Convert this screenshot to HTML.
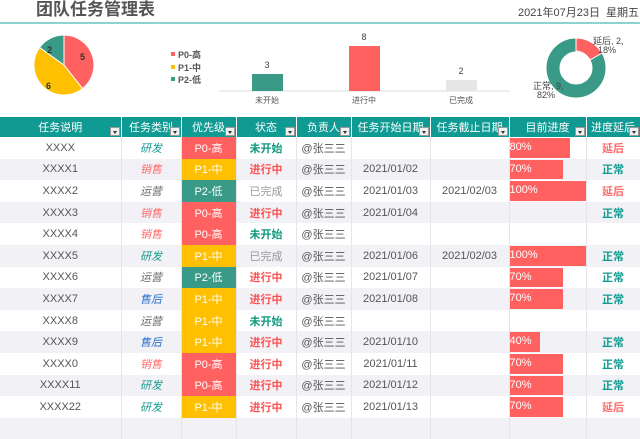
<!DOCTYPE html><html><head><meta charset="utf-8"><style>
*{margin:0;padding:0;box-sizing:border-box}
body{width:640px;height:427px;overflow:hidden;background:#fff;font-family:"Liberation Sans","Noto Sans CJK SC",sans-serif;position:relative;color:#555}
.abs{position:absolute}
table{position:absolute;left:0;top:117px;border-collapse:collapse;table-layout:fixed;width:640px}
td,th{height:21.6px;font-size:11px;text-align:center;border-right:1px solid #e4e4ea;padding:0;white-space:nowrap;overflow:hidden;position:relative;font-weight:normal}
th{height:20px;background:#0f9a93;color:#fff;border-right:1px solid #fff}
th i{position:absolute;right:1px;bottom:1px;width:10px;height:9px;background:#f0f0f0;border:1px solid #999}
th i:after{content:"";position:absolute;left:2px;top:3px;border:2.5px solid transparent;border-top:3px solid #333}
tr:nth-child(odd) td{background:#f1f1f6}
.p0{background:#ff6161!important;color:#fff}.p1{background:#fec000!important;color:#fff}.p2{background:#3a9a88!important;color:#fff}
.c1{color:#1a9a90;font-style:italic}.c2{color:#ff6b6b;font-style:italic}.c3{color:#666;font-style:italic}.c4{color:#2a6fd0;font-style:italic}
.s1{color:#0f9a80;font-weight:bold}.s2{color:#ff5050;font-weight:bold}.s3{color:#999}
.bar{position:absolute;left:0;top:1px;bottom:1px;background:#ff6161;color:#fff;text-align:left;line-height:19px;font-size:11px}
.ok{color:#0f9a90;font-weight:bold}.late{color:#ff6b6b;font-weight:bold}
</style></head><body>
<div class="abs" style="left:36px;top:0px;font-size:17px;line-height:20px;font-weight:bold;color:#555">团队任务管理表</div>
<div class="abs" style="left:518px;top:4px;font-size:11px;color:#444">2021年07月23日&nbsp; 星期五</div>
<div class="abs" style="left:0;top:22px;width:640px;height:2px;background:#8fd3cf"></div>
<svg class="abs" style="left:0;top:0" width="640" height="115">
<g transform="translate(64,65)">
<path d="M0,0 L0,-30 A30,30 0 0 1 18.5,23.6 Z" fill="#ff6161" stroke="#fff"/>
<path d="M0,0 L18.5,23.6 A30,30 0 0 1 -24.4,-17.5 Z" fill="#fec000" stroke="#fff"/>
<path d="M0,0 L-24.4,-17.5 A30,30 0 0 1 0,-30 Z" fill="#3a9a88" stroke="#fff"/>
</g>
<text x="47" y="53" font-size="9" font-weight="bold" fill="#333">2</text>
<text x="80" y="60" font-size="9" font-weight="bold" fill="#333">5</text>
<text x="46" y="89" font-size="9" font-weight="bold" fill="#333">6</text>
<rect x="171" y="52" width="4" height="4" fill="#ff6161"/><text x="178" y="58" font-size="9" font-weight="bold" fill="#555">P0-高</text>
<rect x="171" y="65" width="4" height="4" fill="#fec000"/><text x="178" y="71" font-size="9" font-weight="bold" fill="#555">P1-中</text>
<rect x="171" y="77" width="4" height="4" fill="#3a9a88"/><text x="178" y="83" font-size="9" font-weight="bold" fill="#555">P2-低</text>
<line x1="219" y1="91" x2="510" y2="91" stroke="#ddd"/>
<rect x="252" y="74" width="31" height="17" fill="#3a9a88"/><text x="267" y="68" font-size="9" text-anchor="middle" fill="#444">3</text>
<rect x="349" y="46" width="31" height="45" fill="#ff6161"/><text x="364" y="40" font-size="9" text-anchor="middle" fill="#444">8</text>
<rect x="446" y="80" width="31" height="11" fill="#e6e6e6"/><text x="461" y="74" font-size="9" text-anchor="middle" fill="#444">2</text>
<text x="267" y="103" font-size="8" text-anchor="middle" fill="#555">未开始</text>
<text x="364" y="103" font-size="8" text-anchor="middle" fill="#555">进行中</text>
<text x="461" y="103" font-size="8" text-anchor="middle" fill="#555">已完成</text>
<circle cx="576" cy="68" r="23" fill="none" stroke="#3a9a88" stroke-width="13"/>
<path d="M576,38 A30,30 0 0 1 602,53 L590,60 A17,17 0 0 0 576,51 Z" fill="#ff6161" stroke="#fff"/>
<text x="593" y="44" font-size="9" fill="#444">延后, 2,</text><text x="598" y="53" font-size="9" fill="#444">18%</text>
<text x="533" y="89" font-size="9" fill="#444">正常, 9,</text><text x="537" y="98" font-size="9" fill="#444">82%</text>
</svg>
<table>
<colgroup><col style="width:121px"><col style="width:60px"><col style="width:55px"><col style="width:60px"><col style="width:55px"><col style="width:79px"><col style="width:79px"><col style="width:77px"><col style="width:54px"></colgroup>
<tr><th>任务说明<i></i></th><th>任务类别<i></i></th><th>优先级<i></i></th><th>状态<i></i></th><th>负责人<i></i></th><th>任务开始日期<i></i></th><th>任务截止日期<i></i></th><th>目前进度<i></i></th><th>进度延后<i></i></th></tr>
<tr><td>XXXX</td><td class="c1">研发</td><td class="p0">P0-高</td><td class="s1">未开始</td><td>@张三三</td><td></td><td></td><td><div class="bar" style="width:60px">80%</div></td><td class="late">延后</td></tr>
<tr><td>XXXX1</td><td class="c2">销售</td><td class="p1">P1-中</td><td class="s2">进行中</td><td>@张三三</td><td>2021/01/02</td><td></td><td><div class="bar" style="width:53px">70%</div></td><td class="ok">正常</td></tr>
<tr><td>XXXX2</td><td class="c3">运营</td><td class="p2">P2-低</td><td class="s3">已完成</td><td>@张三三</td><td>2021/01/03</td><td>2021/02/03</td><td><div class="bar" style="width:76px">100%</div></td><td class="late">延后</td></tr>
<tr><td>XXXX3</td><td class="c2">销售</td><td class="p0">P0-高</td><td class="s2">进行中</td><td>@张三三</td><td>2021/01/04</td><td></td><td></td><td class="ok">正常</td></tr>
<tr><td>XXXX4</td><td class="c2">销售</td><td class="p0">P0-高</td><td class="s1">未开始</td><td>@张三三</td><td></td><td></td><td></td><td></td></tr>
<tr><td>XXXX5</td><td class="c1">研发</td><td class="p1">P1-中</td><td class="s3">已完成</td><td>@张三三</td><td>2021/01/06</td><td>2021/02/03</td><td><div class="bar" style="width:76px">100%</div></td><td class="ok">正常</td></tr>
<tr><td>XXXX6</td><td class="c3">运营</td><td class="p2">P2-低</td><td class="s2">进行中</td><td>@张三三</td><td>2021/01/07</td><td></td><td><div class="bar" style="width:53px">70%</div></td><td class="ok">正常</td></tr>
<tr><td>XXXX7</td><td class="c4">售后</td><td class="p1">P1-中</td><td class="s2">进行中</td><td>@张三三</td><td>2021/01/08</td><td></td><td><div class="bar" style="width:53px">70%</div></td><td class="ok">正常</td></tr>
<tr><td>XXXX8</td><td class="c3">运营</td><td class="p1">P1-中</td><td class="s1">未开始</td><td>@张三三</td><td></td><td></td><td></td><td></td></tr>
<tr><td>XXXX9</td><td class="c4">售后</td><td class="p1">P1-中</td><td class="s2">进行中</td><td>@张三三</td><td>2021/01/10</td><td></td><td><div class="bar" style="width:30px">40%</div></td><td class="ok">正常</td></tr>
<tr><td>XXXX0</td><td class="c2">销售</td><td class="p0">P0-高</td><td class="s2">进行中</td><td>@张三三</td><td>2021/01/11</td><td></td><td><div class="bar" style="width:53px">70%</div></td><td class="ok">正常</td></tr>
<tr><td>XXXX11</td><td class="c1">研发</td><td class="p0">P0-高</td><td class="s2">进行中</td><td>@张三三</td><td>2021/01/12</td><td></td><td><div class="bar" style="width:53px">70%</div></td><td class="ok">正常</td></tr>
<tr><td>XXXX22</td><td class="c1">研发</td><td class="p1">P1-中</td><td class="s2">进行中</td><td>@张三三</td><td>2021/01/13</td><td></td><td><div class="bar" style="width:53px">70%</div></td><td class="late">延后</td></tr>
<tr><td></td><td></td><td></td><td></td><td></td><td></td><td></td><td></td><td></td></tr>
</table>
</body></html>
